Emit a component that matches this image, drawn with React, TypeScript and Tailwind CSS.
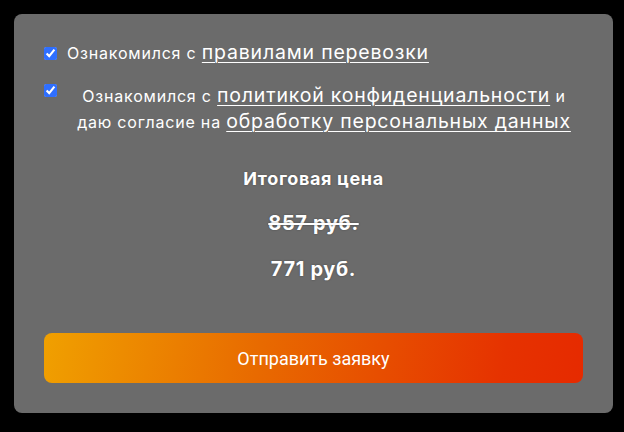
export default function App() {
  return (
    <div className="w-[624px] h-[432px] bg-black p-[14px_11px_19px_14px]">
      <div className="h-full rounded-lg bg-[#6b6b6b] px-[30px] pt-[28px] pb-[30px] flex flex-col text-white font-['Inter',sans-serif] tracking-[0.05em]">
        {/* Terms */}
        <label className="flex items-center gap-[10px] h-[22px]">
          <input type="checkbox" defaultChecked className="w-[13px] h-[13px] m-0 accent-[#2f6fff]" />
          <span className="text-[16px]">
            Ознакомился с{" "}
            <a className="text-[19.5px] underline underline-offset-[3px] decoration-1">правилами перевозки</a>
          </span>
        </label>

        <label className="flex items-start gap-[10px] mt-[19px]">
          <input type="checkbox" defaultChecked className="w-[13px] h-[13px] m-0 mt-[1px] accent-[#2f6fff] shrink-0" />
          <span className="flex-1 text-center text-[16px] leading-[25px] pr-[2px]">
            Ознакомился с{" "}
            <a className="text-[19.5px] underline underline-offset-[3px] decoration-1">политикой конфиденциальности</a>{" "}
            и
            <br />
            даю согласие на{" "}
            <a className="text-[19.5px] underline underline-offset-[3px] decoration-1">обработку персональных данных</a>
          </span>
        </label>

        {/* Price */}
        <div className="flex flex-col items-center mt-[32px] font-bold tracking-[0.04em] [text-shadow:0_0_2px_rgba(0,0,0,0.35)]">
          <div className="text-[18px] leading-[24px]">Итоговая цена</div>
          <div className="text-[20px] leading-[28px] mt-[18px] line-through decoration-2">857 руб.</div>
          <div className="text-[20px] leading-[28px] mt-[18px]">771 руб.</div>
        </div>

        <button className="mt-auto h-[50px] w-full rounded-lg bg-[linear-gradient(100deg,#f0a000_0%,#e86a00_40%,#e63200_85%,#e62a00_100%)] font-['Roboto',sans-serif] text-[18px] tracking-normal text-white">
          Отправить заявку
        </button>
      </div>
    </div>
  );
}
